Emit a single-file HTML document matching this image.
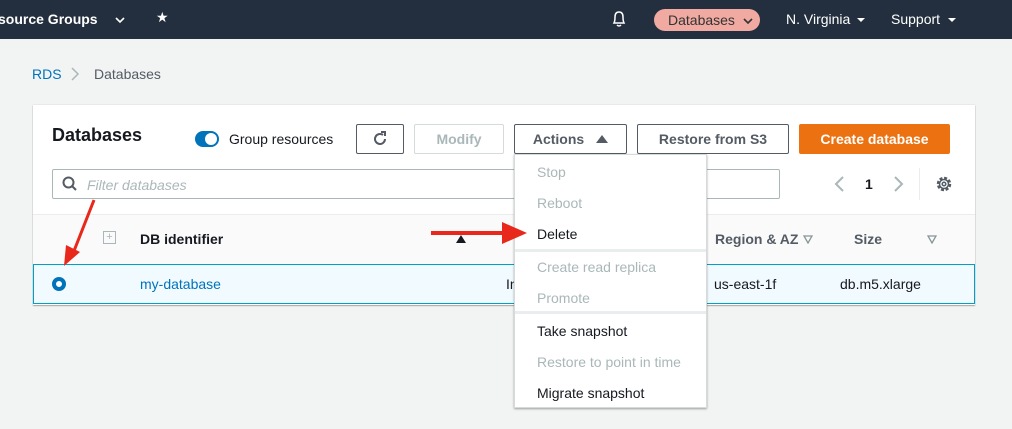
<!DOCTYPE html><html><head><style>
*{box-sizing:border-box;margin:0;padding:0}
body{width:1012px;height:429px;background:#f2f3f3;font-family:"Liberation Sans",sans-serif;position:relative;overflow:hidden;font-size:14px;color:#16191f}
.a{position:absolute}
.hdr{left:0;top:0;width:1012px;height:39px;background:#232f3e;color:#fff;font-size:14px}
.btn{position:absolute;height:30px;border:1px solid #545b64;border-radius:2px;background:#fff;font-weight:bold;color:#545b64;font-size:14px;display:flex;align-items:center;justify-content:center}
.mi{position:absolute;left:22px;font-size:14px;color:#aab7b8}
</style></head><body>
<div class="a hdr">
<div class="a" style="left:-2px;top:11px;font-weight:bold">source Groups</div>
<svg class="a" style="left:115px;top:16px" width="10" height="8"><path d="M1 2l4 4 4-4" stroke="#fff" stroke-width="1.6" fill="none"/></svg>
<div class="a" style="left:156px;top:9px;font-size:14px">&#9733;</div>
<svg class="a" style="left:610px;top:9px" width="18" height="20"><path d="M4 14 Q5 12 5 8 Q5 3 9 3 Q13 3 13 8 Q13 12 14 14 Z M7 16 Q9 18 11 16" stroke="#fff" stroke-width="1.5" fill="none"/></svg>
<div class="a" style="left:654px;top:9px;width:106px;height:22px;border-radius:11px;background:#f0aaa2;color:#333;padding:3px 0 0 14px">Databases</div>
<svg class="a" style="left:743px;top:17px" width="10" height="8"><path d="M1 2l4 4 4-4" stroke="#333" stroke-width="1.6" fill="none"/></svg>
<div class="a" style="left:786px;top:11px">N. Virginia</div>
<svg class="a" style="left:857px;top:17px" width="8" height="6"><path d="M0 1h8l-4 4z" fill="#fff"/></svg>
<div class="a" style="left:891px;top:11px">Support</div>
<svg class="a" style="left:948px;top:17px" width="8" height="6"><path d="M0 1h8l-4 4z" fill="#fff"/></svg>
</div>
<div class="a" style="left:32px;top:66px;color:#0073bb">RDS</div>
<svg class="a" style="left:70px;top:66px" width="10" height="16"><path d="M2 2l6 6-6 6" stroke="#aab7b8" stroke-width="1.5" fill="none"/></svg>
<div class="a" style="left:94px;top:66px;color:#545b64">Databases</div>
<div class="a" style="left:33px;top:105px;width:942px;height:200px;background:#fff;box-shadow:0 1px 1px rgba(0,0,0,.3),0 0 1px rgba(0,0,0,.2)"></div>
<div class="a" style="left:52px;top:125px;font-size:18px;font-weight:bold">Databases</div>
<div class="a" style="left:195px;top:131px;width:24px;height:16px;border-radius:8px;background:#0073bb"><div class="a" style="left:10px;top:2px;width:12px;height:12px;border-radius:6px;background:#fff"></div></div>
<div class="a" style="left:229px;top:131px">Group resources</div>
<div class="btn" style="left:356px;top:124px;width:48px"><svg width="18" height="18"><path d="M14 9a5 5 0 1 1-2-4" stroke="#545b64" stroke-width="2" fill="none"/><path d="M10 2h4v4" stroke="#545b64" stroke-width="2" fill="none"/></svg></div>
<div class="btn" style="left:414px;top:124px;width:90px;border-color:#d5dbdb;color:#aab7b8">Modify</div>
<div class="btn" style="left:514px;top:124px;width:113px">Actions <svg style="margin-left:12px" width="12" height="10"><path d="M0 9h12L6 1z" fill="#545b64"/></svg></div>
<div class="btn" style="left:637px;top:124px;width:152px">Restore from S3</div>
<div class="btn" style="left:799px;top:124px;width:151px;background:#ec7211;border-color:#ec7211;color:#fff">Create database</div>
<div class="a" style="left:52px;top:169px;width:728px;height:30px;border:1px solid #aab7b8;border-radius:2px"></div>
<svg class="a" style="left:62px;top:176px" width="16" height="16"><circle cx="6.5" cy="6.5" r="5" stroke="#545b64" stroke-width="2" fill="none"/><path d="M10 10l4 4" stroke="#545b64" stroke-width="2"/></svg>
<div class="a" style="left:87px;top:177px;color:#aab7b8;font-style:italic;font-size:14px">Filter databases</div>
<svg class="a" style="left:833px;top:175px" width="12" height="18"><path d="M10 2L3 9l7 7" stroke="#aab7b8" stroke-width="2" fill="none"/></svg>
<div class="a" style="left:865px;top:176px;font-weight:bold">1</div>
<svg class="a" style="left:893px;top:175px" width="12" height="18"><path d="M2 2l7 7-7 7" stroke="#aab7b8" stroke-width="2" fill="none"/></svg>
<div class="a" style="left:919px;top:168px;width:1px;height:32px;background:#eaeded"></div>
<svg class="a" style="left:935px;top:175px" width="18" height="18"><circle cx="9" cy="9" r="6" stroke="#545b64" stroke-width="2.5" fill="none" stroke-dasharray="3 1.7"/><circle cx="9" cy="9" r="4.5" stroke="#545b64" stroke-width="1.5" fill="none"/><circle cx="9" cy="9" r="1.8" stroke="#545b64" stroke-width="1.5" fill="none"/></svg>
<div class="a" style="left:33px;top:214px;width:942px;height:50px;background:#fafafa;border-top:1px solid #eaeded"></div>
<div class="a" style="left:103px;top:231px;width:13px;height:13px;border:1px solid #aab7b8;color:#aab7b8;font-size:11px;line-height:10px;text-align:center">+</div>
<div class="a" style="left:140px;top:231px;font-weight:bold">DB identifier</div>
<svg class="a" style="left:456px;top:235px" width="10" height="9"><path d="M0 8h10L5 0z" fill="#16191f"/></svg>
<div class="a" style="left:715px;top:231px;font-weight:bold;color:#545b64">Region &amp; AZ</div>
<svg class="a" style="left:803px;top:235px" width="10" height="9"><path d="M1 1h8L5 8z" stroke="#879596" stroke-width="1.3" fill="none"/></svg>
<div class="a" style="left:854px;top:231px;font-weight:bold;color:#545b64">Size</div>
<svg class="a" style="left:927px;top:235px" width="10" height="9"><path d="M1 1h8L5 8z" stroke="#879596" stroke-width="1.3" fill="none"/></svg>
<div class="a" style="left:33px;top:264px;width:942px;height:40px;background:#f1faff;border:1px solid #00a1c9"></div>
<div class="a" style="left:52px;top:277px;width:14px;height:14px;border-radius:7px;border:4px solid #0073bb;background:#fff"></div>
<div class="a" style="left:140px;top:276px;color:#0073bb">my-database</div>
<div class="a" style="left:506px;top:276px">In</div>
<div class="a" style="left:714px;top:276px">us-east-1f</div>
<div class="a" style="left:840px;top:276px">db.m5.xlarge</div>
<div class="a" style="left:514px;top:154px;width:193px;height:254px;background:#fff;box-shadow:0 1px 2px rgba(0,0,0,.35);border:1px solid #d5dbdb">
<div class="mi" style="top:9px">Stop</div>
<div class="mi" style="top:40px">Reboot</div>
<div class="mi" style="top:71px;color:#16191f">Delete</div>
<div class="a" style="left:0;top:94px;width:191px;height:3px;background:#eaeded"></div>
<div class="mi" style="top:104px">Create read replica</div>
<div class="mi" style="top:135px">Promote</div>
<div class="a" style="left:0;top:156px;width:191px;height:3px;background:#eaeded"></div>
<div class="mi" style="top:168px;color:#16191f">Take snapshot</div>
<div class="mi" style="top:199px">Restore to point in time</div>
<div class="mi" style="top:230px;color:#16191f">Migrate snapshot</div>
</div>
<svg class="a" style="left:0;top:0" width="1012" height="429"><path d="M94 200 L72 256" stroke="#e8281b" stroke-width="3"/><path d="M64 266 L66 245 L80 252 Z" fill="#e8281b"/><path d="M431 233 H505" stroke="#e8281b" stroke-width="4"/><path d="M527 233 L502 222 L502 244 Z" fill="#e8281b"/></svg>
</body></html>
